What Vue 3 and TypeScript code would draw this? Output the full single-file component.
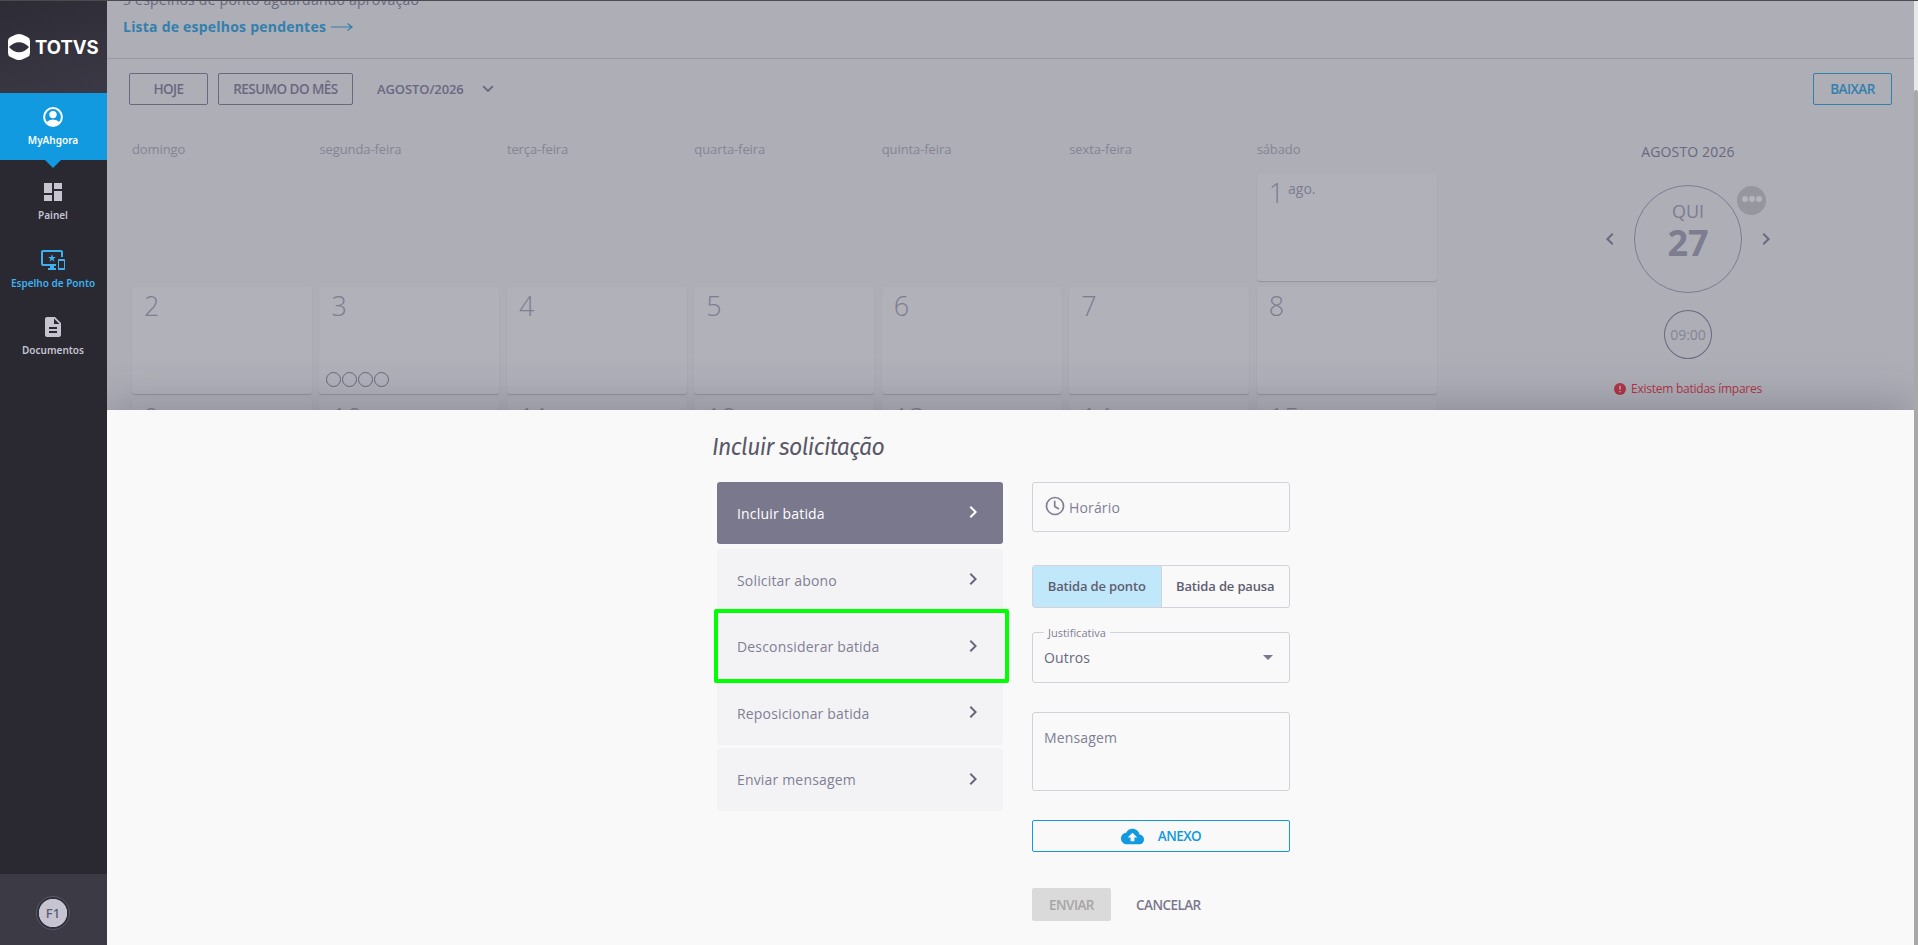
<script setup lang="ts">
import { ref } from "vue";

interface NavItem {
  label: string;
  icon: string;
  state?: string;
}

const nav: NavItem[] = [
  {
    label: "Painel",
    icon: "M3 13h8V3H3v10zm0 8h8v-6H3v6zm10 0h8V11h-8v10zm0-18v6h8V3h-8z",
  },
  {
    label: "Espelho de Ponto",
    icon: "M23 11.01L18 11c-.55 0-1 .45-1 1v9c0 .55.45 1 1 1h5c.55 0 1-.45 1-1v-9c0-.55-.45-.99-1-.99zM23 20h-5v-7h5v7zM20 2H2C.89 2 0 2.89 0 4v12c0 1.1.89 2 2 2h7v2H7v2h8v-2h-2v-2h2v-2H2V4h18v5h2V4c0-1.11-.9-2-2-2zm-8.03 7L11 6l-.97 3H7l2.47 1.76-.94 2.91 2.47-1.8 2.47 1.8-.94-2.91L15 9h-3.03z",
    state: "current",
  },
  {
    label: "Documentos",
    icon: "M14 2H6c-1.1 0-1.99.9-1.99 2L4 20c0 1.1.89 2 1.99 2H18c1.1 0 2-.9 2-2V8l-6-6zm2 16H8v-2h8v2zm0-4H8v-2h8v2zm-3-5V3.5L18.5 9H13z",
  },
];

const weekdays = [
  "domingo",
  "segunda-feira",
  "terça-feira",
  "quarta-feira",
  "quinta-feira",
  "sexta-feira",
  "sábado",
];

// agosto de 2026 começa num sábado
const days = Array.from({ length: 21 }, (_, i) => i - 5);

const actions = [
  "Incluir batida",
  "Solicitar abono",
  "Desconsiderar batida",
  "Reposicionar batida",
  "Enviar mensagem",
];
const selected = ref(0);
const punchType = ref("ponto");

const chevron = "M10 6L8.59 7.41 13.17 12l-4.58 4.59L10 18l6-6z";
</script>

<template>
  <div class="app">
    <aside class="sidebar">
      <div class="logo">
        <svg class="logo-mark" viewBox="0 0 22 26">
          <path
            fill="#fff"
            fill-rule="evenodd"
            d="M8 .6Q11-.4 14 .6L19.500 2.900Q22 4 22 7V19Q22 22 19.500 23.100L14 25.400Q11 26.400 8 25.400L2.500 23.100Q0 22 0 19V7Q0 4 2.500 2.900ZM1 13Q5.500 8.200 11 8.200T21 13Q16.500 18.300 11 18.300T1 13Z"
          />
        </svg>
        <span class="logo-text">TOTVS</span>
      </div>
      <div class="home">
        <svg viewBox="0 0 20 20" class="home-icon">
          <circle cx="10" cy="10" r="8.9" fill="none" stroke="#fff" stroke-width="2" />
          <circle cx="10" cy="7.600" r="3.700" fill="#fff" />
          <path fill="#fff" d="M3.400 15.200Q6 12.600 10 12.600T16.600 15.200Q14 18.800 10 18.800T3.400 15.200Z" />
        </svg>
        <span>MyAhgora</span>
      </div>
      <nav class="nav">
        <div v-for="item in nav" :key="item.label" class="nav-item" :class="item.state">
          <svg viewBox="0 0 24 24" class="nav-icon"><path :d="item.icon" /></svg>
          <span>{{ item.label }}</span>
        </div>
      </nav>
      <div class="user"><div class="avatar">F1</div></div>
    </aside>

    <main class="main">
      <header class="pending">
        <div class="pending-text">5 espelhos de ponto aguardando aprovação</div>
        <div class="pending-link">
          <span>Lista de espelhos pendentes</span>
          <svg width="22" height="10" viewBox="0 0 22 10">
            <path d="M0 5H21M16.500 1.500L21 5L16.500 8.500" fill="none" stroke="currentColor" stroke-width="1.200" />
          </svg>
        </div>
      </header>

      <div class="toolbar">
        <button class="btn today">HOJE</button>
        <button class="btn summary">RESUMO DO MÊS</button>
        <span class="month">AGOSTO/2026</span>
        <svg class="month-arrow" viewBox="0 0 12 8">
          <path d="M1.200 1.200L6 6L10.800 1.200" fill="none" stroke="currentColor" stroke-width="1.900" />
        </svg>
        <button class="btn download">BAIXAR</button>
      </div>

      <div class="content">
        <section class="calendar">
          <div class="week">
            <span v-for="name in weekdays" :key="name">{{ name }}</span>
          </div>
          <div class="days">
            <div v-for="day in days" :key="day" class="day" :class="{ blank: day < 1 }">
              <template v-if="day > 0">
                <span class="number">{{ day }}</span>
                <span v-if="day === 1" class="abbr">ago.</span>
                <div v-if="day === 3" class="punches"><i v-for="n in 4" :key="n"></i></div>
              </template>
            </div>
          </div>
        </section>

        <section class="detail">
          <div class="detail-month">AGOSTO 2026</div>
          <div class="picker">
            <svg class="arrow left" viewBox="0 0 24 24"><path :d="chevron" /></svg>
            <div class="date">
              <span class="date-week">QUI</span>
              <span class="date-number">27</span>
              <div class="more"><i></i><i></i><i></i></div>
            </div>
            <svg class="arrow" viewBox="0 0 24 24"><path :d="chevron" /></svg>
          </div>
          <div class="hours">09:00</div>
          <div class="warning">
            <svg viewBox="0 0 12 12" width="12" height="12">
              <circle cx="6" cy="6" r="6" fill="#b03443" />
              <path d="M6 2.800V6.800M6 7.900V9.200" stroke="#c9b5bd" stroke-width="1.300" />
            </svg>
            <span>Existem batidas ímpares</span>
          </div>
        </section>
      </div>
    </main>

    <div class="scroll"><div class="thumb"></div></div>

    <section class="sheet">
      <div class="sheet-inner">
        <h2>Incluir solicitação</h2>
        <div class="columns">
          <div class="actions">
            <div
              v-for="(action, i) in actions"
              :key="action"
              class="action"
              :class="{ active: selected === i }"
              @click="selected = i"
            >
              <span>{{ action }}</span>
              <svg viewBox="0 0 24 24"><path :d="chevron" /></svg>
            </div>
            <div class="highlight"></div>
          </div>

          <div class="form">
            <div class="field time">
              <svg viewBox="0 0 20 20">
                <circle cx="10" cy="10" r="8.500" />
                <path d="M9.700 4.800V10.400L14 13" />
              </svg>
              <span>Horário</span>
            </div>
            <div class="toggle">
              <div :class="{ on: punchType === 'ponto' }" @click="punchType = 'ponto'">Batida de ponto</div>
              <div :class="{ on: punchType === 'pausa' }" @click="punchType = 'pausa'">Batida de pausa</div>
            </div>
            <div class="field reason">
              <label>Justificativa</label>
              <span>Outros</span>
              <svg viewBox="0 0 10 5"><path d="M0 0H10L5 5Z" /></svg>
            </div>
            <div class="field message">Mensagem</div>
            <button class="attach">
              <svg viewBox="0 0 24 24">
                <path d="M19.350 10.040C18.670 6.590 15.640 4 12 4 9.110 4 6.600 5.640 5.350 8.040 2.340 8.360 0 10.910 0 14c0 3.310 2.690 6 6 6h13c2.760 0 5-2.240 5-5 0-2.640-2.050-4.780-4.650-4.960zM14 13v4h-4v-4H7l5-5 5 5h-3z" />
              </svg>
              <span>ANEXO</span>
            </button>
            <div class="footer">
              <button class="send" disabled>ENVIAR</button>
              <button class="cancel">CANCELAR</button>
            </div>
          </div>
        </div>
      </div>
    </section>
    <div class="topline"></div>
  </div>
</template>

<style>
body {
  margin: 0;
  overflow: hidden;
}
</style>

<style scoped>
* {
  box-sizing: border-box;
}

.app {
  position: relative;
  display: flex;
  width: 1918px;
  height: 945px;
  overflow: hidden;
  background: #aeaeb7;
  color: #696880;
  font-family: "Open Sans", "Noto Sans", sans-serif;
  font-size: 14px;
}

button {
  font-family: inherit;
  font-size: 13.500px;
  font-weight: 600;
  padding: 0;
  letter-spacing: -0.550px;
}

.topline {
  position: absolute;
  top: 0;
  left: 0;
  width: 100%;
  height: 1px;
  background: #4b4a4e;
}

/* sidebar */
.sidebar {
  display: flex;
  flex-direction: column;
  width: 107px;
  background: #2a2932;
  color: #c5c4cf;
  font-family: "Noto Sans", sans-serif;
  font-size: 10px;
  font-weight: 600;
  line-height: 14px;
}

.logo {
  display: flex;
  align-items: center;
  gap: 5px;
  height: 93px;
  padding: 1px 0 0 8px;
  background: linear-gradient(165deg, #2d2c35, #3a3945);
}

.logo-mark {
  width: 22px;
  height: 26px;
}

.logo-text {
  color: #fff;
  font-family: Inter, sans-serif;
  font-size: 18.500px;
  font-weight: 700;
  letter-spacing: 0;
}

.home {
  position: relative;
  display: flex;
  flex-direction: column;
  align-items: center;
  height: 67px;
  padding: 14px 1px 0 0;
  gap: 6px;
  background: #119ae0;
  color: #fff;
}

.home::after {
  content: "";
  position: absolute;
  top: 67px;
  left: 45px;
  border: 8.500px solid transparent;
  border-top-color: #119ae0;
  border-bottom: 0;
}

.home-icon {
  width: 20px;
  height: 20px;
}

.nav {
  flex: 1;
  padding: 20px 1px 0 0;
}

.nav-item {
  display: flex;
  flex-direction: column;
  align-items: center;
  gap: 4px;
  height: 67.500px;
}

.nav-icon {
  width: 24px;
  height: 24px;
  fill: currentColor;
}

.current {
  color: #3fb0f0;
}

.user {
  display: flex;
  justify-content: center;
  height: 71px;
  padding: 22px 1px 0 0;
  background: #3c3b45;
}

.avatar {
  display: flex;
  align-items: center;
  justify-content: center;
  width: 34px;
  height: 34px;
  border: 1px solid #56556a;
  border-radius: 50%;
  background: radial-gradient(circle, #c5c4d0 13.800px, #32313b 14.500px);
  color: #5b5a70;
  font-size: 13px;
  font-weight: 500;
}

/* page */
.main {
  width: 1807px;
}

.pending {
  display: flex;
  flex-direction: column;
  height: 59px;
  padding-left: 16px;
  border-bottom: 1px solid #9998a4;
}

.pending-text {
  height: 16px;
  line-height: 20px;
  margin-top: -10px;
  letter-spacing: 0.220px;
}

.pending-link {
  display: flex;
  align-items: center;
  gap: 5px;
  height: 41px;
  color: #3280ad;
  font-weight: 700;
  letter-spacing: 0.220px;
}

.toolbar {
  display: flex;
  align-items: center;
  height: 60px;
  padding: 0 22px;
}

.btn {
  height: 32px;
  border: 1px solid #696880;
  border-radius: 2px;
  background: none;
  color: #696880;
}

.today {
  width: 79px;
}

.summary {
  width: 135px;
  margin-left: 10px;
}

.month {
  margin-left: 24px;
  font-weight: 600;
  font-size: 13px;
  letter-spacing: -0.100px;
}

.month-arrow {
  width: 12px;
  height: 8px;
  margin-left: 18px;
}

.download {
  width: 79px;
  margin-left: auto;
  border-color: #3280ad;
  color: #3280ad;
}

.content {
  display: flex;
}

.calendar {
  width: 1355px;
  padding: 20px 0 0 25px;
}

.week,
.days {
  display: grid;
  grid-template-columns: repeat(7, 180px);
  column-gap: 7.450px;
}

.week {
  height: 35px;
  line-height: 20px;
  font-size: 13px;
  letter-spacing: -0.100px;
  color: #858496;
}

.days {
  grid-auto-rows: 107px;
  row-gap: 5.500px;
}

.day {
  position: relative;
  padding: 4px 12px;
  border-radius: 3px;
  background: #b1b1ba;
  box-shadow: 0 1px 1px #93929e;
  color: #7d7c90;
}

.day.blank {
  background: none;
  box-shadow: none;
}

.number {
  font-size: 27px;
  font-weight: 300;
  line-height: 30px;
}

.abbr {
  margin-left: 4px;
  line-height: 10px;
  vertical-align: 9px;
}

.punches {
  position: absolute;
  left: 7px;
  bottom: 7px;
  display: flex;
  gap: 1px;
}

.punches i {
  width: 15px;
  height: 15px;
  border: 1px solid #696880;
  border-radius: 50%;
}

.detail {
  display: flex;
  flex-direction: column;
  align-items: center;
  width: 452px;
  padding-top: 23px;
}

.detail-month {
  line-height: 20px;
  letter-spacing: 0.150px;
}

.picker {
  display: flex;
  align-items: center;
  gap: 12px;
  margin-top: 23px;
}

.arrow {
  width: 24px;
  height: 24px;
  fill: currentColor;
}

.left {
  transform: rotate(180deg);
}

.date {
  position: relative;
  display: flex;
  flex-direction: column;
  align-items: center;
  width: 108px;
  height: 108px;
  padding-top: 13px;
  border: 1px solid #7d7c90;
  border-radius: 50%;
  color: #7d7c90;
}

.date-week {
  font-size: 18px;
  line-height: 24px;
}

.date-number {
  margin-top: 2px;
  font-size: 36px;
  font-weight: 700;
  line-height: 36px;
}

.more {
  position: absolute;
  top: 0;
  left: 102px;
  display: flex;
  align-items: center;
  justify-content: center;
  width: 29px;
  height: 29px;
  padding-bottom: 3px;
  gap: 1px;
  border-radius: 50%;
  background: #96969f;
}

.more i {
  width: 6px;
  height: 6px;
  border-radius: 50%;
  background: #b4b4bd;
}

.hours {
  width: 48px;
  height: 49px;
  margin-top: 17px;
  border: 1px solid #696880;
  border-radius: 50%;
  line-height: 48px;
  text-align: center;
  color: #858496;
}

.warning {
  display: flex;
  align-items: center;
  gap: 5px;
  margin-top: 20px;
  color: #b03443;
  font-size: 12px;
  letter-spacing: -0.250px;
  line-height: 20px;
}

.scroll {
  width: 4px;
  background: #e8e8e6;
}

.thumb {
  height: 855px;
  margin-top: 90px;
  border-radius: 2px 2px 0 0;
  background: #a8a8a6;
}

/* bottom sheet */
.sheet {
  position: absolute;
  left: 107px;
  bottom: 0;
  width: 1807px;
  height: 535px;
  padding-left: 605px;
  background: #f9f9f9;
  clip-path: inset(-60px 0 0 0);
  box-shadow: 0 -6px 40px rgba(60, 60, 75, 0.3);
}

h2 {
  margin: 0;
  height: 72px;
  padding-top: 21px;
  color: #595868;
  font-family: "Fira Sans", "Open Sans", sans-serif;
  font-size: 23px;
  font-style: italic;
  font-weight: 400;
  font-stretch: 85%;
  letter-spacing: -0.600px;
  line-height: 32px;
}

.columns {
  display: flex;
  gap: 29px;
  padding-left: 5px;
}

.actions {
  position: relative;
  display: flex;
  flex-direction: column;
  gap: 3.500px;
  width: 286px;
}

.action {
  display: flex;
  align-items: center;
  justify-content: space-between;
  height: 63px;
  padding: 0 18px 0 20px;
  border-radius: 3px;
  background: #f3f3f6;
  color: #807f94;
  letter-spacing: 0.170px;
}

.action svg {
  width: 24px;
  height: 24px;
  margin-top: -2px;
  fill: #69687a;
}

.action.active {
  height: 62px;
  margin-bottom: 1px;
  background: #79788d;
  color: #fff;
}

.active svg {
  fill: #fff;
}

.highlight {
  position: absolute;
  top: 127px;
  left: -3px;
  width: 295px;
  height: 74px;
  border: 4px solid #00ff00;
  border-radius: 2px;
}

.form {
  display: flex;
  flex-direction: column;
  width: 258px;
}

.field {
  position: relative;
  display: flex;
  align-items: center;
  border: 1px solid #d3d2da;
  border-radius: 3px;
  padding: 0 11px;
  color: #807f94;
  letter-spacing: 0.150px;
}

.time {
  height: 50px;
  gap: 4px;
  padding-left: 12px;
}

.time svg {
  width: 20px;
  height: 20px;
  margin-top: -2px;
  fill: none;
  stroke: #807f94;
  stroke-width: 1.700;
}

.toggle {
  display: flex;
  height: 43px;
  margin-top: 33px;
  border: 1px solid #d3d2da;
  border-radius: 3px;
  color: #5f5e70;
  font-size: 13px;
  font-weight: 600;
  letter-spacing: -0.150px;
  line-height: 41px;
  text-align: center;
}

.toggle div {
  flex: 1;
}

.toggle div + div {
  border-left: 1px solid #d3d2da;
}

.toggle .on {
  background: #c1e7fa;
}

.reason {
  height: 51px;
  margin-top: 24px;
  justify-content: space-between;
  color: #696880;
}

.reason label {
  position: absolute;
  top: -9px;
  left: 11px;
  padding: 0 4px;
  background: #f9f9f9;
  color: #807f94;
  font-size: 11px;
  letter-spacing: 0;
  line-height: 18px;
}

.reason svg {
  width: 10px;
  height: 5px;
  margin-right: 5px;
  fill: #79788d;
}

.message {
  height: 79px;
  margin-top: 29px;
  align-items: flex-start;
  padding-top: 15px;
}

.attach {
  display: flex;
  align-items: center;
  justify-content: center;
  gap: 14px;
  height: 32px;
  margin-top: 29px;
  border: 1px solid #119ae0;
  border-radius: 2px;
  background: none;
  color: #119ae0;
}

.attach svg {
  width: 23px;
  height: 23px;
  fill: currentColor;
}

.footer {
  display: flex;
  margin-top: 36px;
  height: 33px;
}

.footer button {
  border: 0;
  border-radius: 2px;
  background: none;
}

.footer .send {
  width: 79px;
  background: #dadada;
  color: #a6a6a6;
}

.footer .cancel {
  margin-left: 25px;
  color: #79788d;
}
</style>
